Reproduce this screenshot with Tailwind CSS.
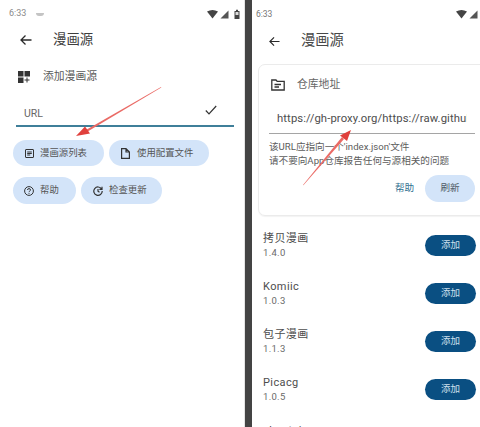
<!DOCTYPE html>
<html lang="zh">
<head>
  <meta charset="UTF-8">
  <title>漫画源</title>
  <script src="https://cdn.jsdelivr.net/npm/@tailwindcss/browser@4"></script>
</head>
<body class="bg-white text-[#44474a] font-['Roboto','Noto_Sans_CJK_SC',sans-serif] overflow-hidden">
  <div class="relative flex w-[480px] h-[427px] overflow-hidden">

    <!-- left phone -->
    <div class="w-[245px] shrink-0 border-r border-[#e4e4e4]">
      <div class="flex items-center justify-between h-[14px] mt-[7px] pl-[9px] pr-[3px] text-[9px] text-[#8a8a8a]">
        <div class="flex items-center gap-[10px]">
          <span>6:33</span>
          <span class="w-[8px] h-[3px] rounded-b-full bg-[#c4c4c4]"></span>
        </div>
        <div class="flex items-center gap-[2px]">
          <svg width="11" height="9" viewBox="0 0 11 9"><path d="M0 1.5Q5.5-1.5 11 1.5L5.5 8.5Z" fill="#444"/></svg>
          <svg width="9" height="9" viewBox="0 0 9 9"><path d="M8.5 0.5V8.5H0.5Z" fill="#555"/></svg>
          <svg width="8" height="10" viewBox="0 0 8 10" class="ml-[2px]"><path d="M1.5 2h1.5V.8h2V2h1.5v8h-5Z" fill="#444"/><rect x="2.5" y="3" width="3" height="3" fill="#ddd"/></svg>
        </div>
      </div>

      <div class="flex items-center h-[26px] mt-[6px] pl-[20px]">
        <svg width="12" height="12" viewBox="0 0 12 12" fill="none" stroke="#2a2a2a" stroke-width="1.3"><path d="M11.5 6H1M5.5 1.5 1 6l4.500 4.500"/></svg>
        <span class="ml-[21px] text-[13.400px] text-[#3d3d3d]">漫画源</span>
      </div>

      <div class="flex items-center h-[14px] mt-[17px] pl-[18px]">
        <svg width="12" height="12" viewBox="0 0 12 12" fill="#333"><rect width="5.500" height="5.500"/><rect x="6.500" width="5.500" height="5.500"/><rect y="6.500" width="5.500" height="5.500"/><path d="M8.500 6.500h1v2h2v1h-2v2h-1v-2h-2v-1h2Z"/></svg>
        <span class="ml-[13px] text-[10.800px] text-[#5a5a5a]">添加漫画源</span>
      </div>

      <div class="flex items-center justify-between h-[22px] mt-[19px] ml-[16px] mr-[10px] pl-[8px] pr-[17px] border-b-2 border-[#3f7f99] box-content">
        <span class="text-[10.500px] text-[#666] -mt-[1px]">URL</span>
        <svg width="12" height="10" viewBox="0 0 12 10" fill="none" stroke="#333" stroke-width="1.200" class="-mt-[8px]"><path d="M.8 5.500 4 8.800 11.200 1"/></svg>
      </div>

      <div class="flex gap-[5px] mt-[13px] ml-[13px]">
        <div class="flex items-center w-[91px] h-[26px] pl-[12px] rounded-full bg-[#d3e4f9]">
          <svg width="9" height="9" viewBox="0 0 9 9" fill="none" stroke="#333" stroke-width="1"><rect x=".5" y=".5" width="8" height="8" rx=".5"/><path d="M2.200 3h4.600M2.200 4.500h4.600M2.200 6h3"/></svg>
          <span class="ml-[6px] text-[9.400px] text-[#555]">漫画源列表</span>
        </div>
        <div class="flex items-center w-[100px] h-[26px] pl-[12px] rounded-full bg-[#d3e4f9]">
          <svg width="9" height="11" viewBox="0 0 9 11" fill="none" stroke="#333" stroke-width="1.200"><path d="M.6.6H5L8.400 4V10.400H.6ZM5 .6V4H8.400"/></svg>
          <span class="ml-[7px] text-[9.400px] text-[#555]">使用配置文件</span>
        </div>
      </div>

      <div class="flex gap-[5px] mt-[11px] ml-[13px]">
        <div class="flex items-center w-[63px] h-[27px] pl-[11px] rounded-full bg-[#d3e4f9]">
          <svg width="10" height="10" viewBox="0 0 10 10" fill="none" stroke="#333" stroke-width="1"><circle cx="5" cy="5" r="4.400"/><path d="M3.500 4Q3.500 2.600 5 2.600T6.500 4C6.500 5 5 5 5 6.200M5 7v.8"/></svg>
          <span class="ml-[6px] text-[9.400px] text-[#555]">帮助</span>
        </div>
        <div class="flex items-center w-[81px] h-[27px] pl-[12px] rounded-full bg-[#d3e4f9]">
          <svg width="10" height="10" viewBox="0 0 10 10" fill="none" stroke="#333" stroke-width="1.200"><path d="M8.600 3A4.200 4.200 0 1 0 9.200 5M9 .8V3.400H6.400M5 3v2.300l1.500 1"/></svg>
          <span class="ml-[6px] text-[9.400px] text-[#555]">检查更新</span>
        </div>
      </div>
    </div>

    <!-- divider -->
    <div class="w-[7px] shrink-0 bg-[#444]"></div>

    <!-- right phone -->
    <div class="flex-1 min-w-0">
      <div class="flex items-center justify-between h-[14px] mt-[7px] pl-[4px] pr-[2px] text-[8.500px] text-[#777]">
        <span>6:33</span>
        <div class="flex items-center gap-[2px]">
          <svg width="11" height="9" viewBox="0 0 11 9"><path d="M0 1.500Q5.500-1.500 11 1.500L5.500 8.500Z" fill="#444"/></svg>
          <svg width="9" height="9" viewBox="0 0 9 9"><path d="M8.500 .5V8.500H.5Z" fill="#555"/></svg>
        </div>
      </div>

      <div class="flex items-center h-[26px] mt-[7px] pl-[17px]">
        <svg width="11" height="11" viewBox="0 0 12 12" fill="none" stroke="#2a2a2a" stroke-width="1.300"><path d="M11.500 6H1M5.500 1.500 1 6l4.500 4.500"/></svg>
        <span class="ml-[21px] text-[14.300px] text-[#484848]">漫画源</span>
      </div>

      <div class="w-[240px] h-[152px] mt-[10px] ml-[6px] rounded-[7px] border border-[#ebebeb] shadow-[0_1px_1px_rgba(0,0,0,0.05)]">
        <div class="flex items-center h-[14px] mt-[13px] pl-[12px]">
          <svg width="14" height="12" viewBox="0 0 14 12" fill="none" stroke="#333" stroke-width="1.300"><path d="M.8 1H5L6.200 2.400H13.200V11H.8ZM3.500 5.500H10M3.500 8H8"/></svg>
          <span class="ml-[12px] text-[10.800px] text-[#666]">仓库地址</span>
        </div>
        <div class="w-[206px] h-[36px] mt-[6px] ml-[10px] pt-[14px] pl-[8px] pr-[8px] border-b border-[#a5a5a5]">
          <div class="whitespace-nowrap overflow-hidden text-[11.300px] leading-[14px] tracking-[0.1px] text-[#4d4d4d]">https://gh-proxy.org/https://raw.githubusercontent.com</div>
        </div>
        <div class="mt-[6px] ml-[10px] text-[9.600px] leading-[14px] text-[#5c5c5c]">
          <div>该URL应指向一个'index.json'文件</div>
          <div>请不要向App仓库报告任何与源相关的问题</div>
        </div>
        <div class="flex items-center mt-[7px] ml-[136px]">
          <span class="w-[30px] text-[9.600px] text-[#2f6f8f]">帮助</span>
          <div class="flex items-center justify-center w-[50px] h-[27px] rounded-full bg-[#d3e4f9] text-[9.600px] text-[#4d5a66]">刷新</div>
        </div>
      </div>

      <div class="flex flex-col gap-[10px] mt-[10px] pl-[11px] pr-[4px]">
        <div class="flex items-center justify-between h-[38px]">
          <div>
            <div class="text-[11px] leading-[14px] tracking-[0.4px] text-[#4d4d4d]">拷贝漫画</div>
            <div class="text-[9.500px] leading-[13px] tracking-[0.3px] text-[#6a6a6a]">1.4.0</div>
          </div>
          <div class="flex items-center justify-center w-[51px] h-[21px] rounded-full bg-[#0a4f82] text-[9.500px] text-[#cfe0ee]">添加</div>
        </div>
        <div class="flex items-center justify-between h-[38px]">
          <div>
            <div class="text-[11px] leading-[14px] tracking-[0.4px] text-[#4d4d4d]">Komiic</div>
            <div class="text-[9.500px] leading-[13px] tracking-[0.3px] text-[#6a6a6a]">1.0.3</div>
          </div>
          <div class="flex items-center justify-center w-[51px] h-[21px] rounded-full bg-[#0a4f82] text-[9.500px] text-[#cfe0ee]">添加</div>
        </div>
        <div class="flex items-center justify-between h-[38px]">
          <div>
            <div class="text-[11px] leading-[14px] tracking-[0.4px] text-[#4d4d4d]">包子漫画</div>
            <div class="text-[9.500px] leading-[13px] tracking-[0.3px] text-[#6a6a6a]">1.1.3</div>
          </div>
          <div class="flex items-center justify-center w-[51px] h-[21px] rounded-full bg-[#0a4f82] text-[9.500px] text-[#cfe0ee]">添加</div>
        </div>
        <div class="flex items-center justify-between h-[38px]">
          <div>
            <div class="text-[11px] leading-[14px] tracking-[0.4px] text-[#4d4d4d]">Picacg</div>
            <div class="text-[9.500px] leading-[13px] tracking-[0.3px] text-[#6a6a6a]">1.0.5</div>
          </div>
          <div class="flex items-center justify-center w-[51px] h-[21px] rounded-full bg-[#0a4f82] text-[9.500px] text-[#cfe0ee]">添加</div>
        </div>
        <div class="flex items-center justify-between h-[38px]">
          <div>
            <div class="text-[11px] leading-[14px] tracking-[0.4px] text-[#4d4d4d]">ehentai</div>
            <div class="text-[9.500px] leading-[13px] tracking-[0.3px] text-[#6a6a6a]">1.0.0</div>
          </div>
          <div class="flex items-center justify-center w-[51px] h-[21px] rounded-full bg-[#0a4f82] text-[9.500px] text-[#cfe0ee]">添加</div>
        </div>
      </div>
    </div>

    <!-- red annotation arrows on top of the screenshot -->
    <svg class="absolute left-0 top-0 pointer-events-none" width="480" height="427" viewBox="0 0 480 427">
      <path d="M161 87 161.300 87.400 86 132.500 85 130.500Z" fill="#ea6a65"/>
      <path d="M76 136 85 126.500 90 133.500Z" fill="#e0403c"/>
      <path d="M303 185 303.400 185.300 344 139 342 137Z" fill="#ea6a65"/>
      <path d="M351 130 340 135.500 347 141Z" fill="#e0403c"/>
    </svg>
  </div>
</body>
</html>
